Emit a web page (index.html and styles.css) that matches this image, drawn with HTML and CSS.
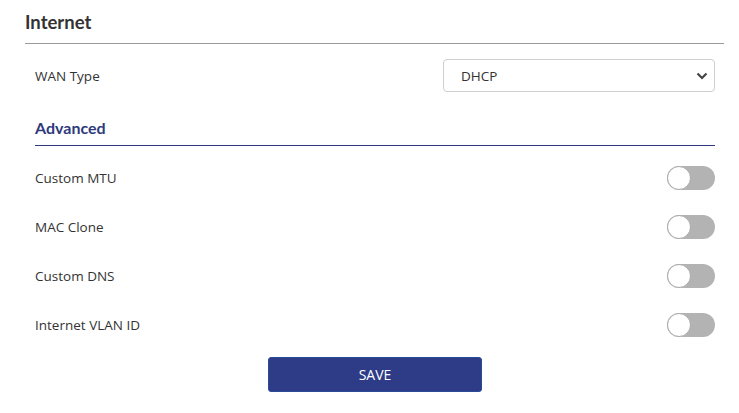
FILE: index.html
```
<!DOCTYPE html>
<html>
<head>
<meta charset="utf-8">
<link rel="stylesheet" href="styles.css">
</head>
<body>
<div class="page">
  <h1 class="title">Internet</h1>
  <div class="section">
    <div class="wan-row">
      <span class="label">WAN Type</span>
      <div class="select">
        <span>DHCP</span>
        <svg class="chev" width="12" height="8" viewBox="0 0 12 8"><path d="M1.5 1.5 L6 6 L10.5 1.5" fill="none" stroke="#444" stroke-width="2.2"/></svg>
      </div>
    </div>
    <h2 class="sub">Advanced</h2>
    <div class="rows">
      <div class="row"><span class="label">Custom MTU</span><span class="toggle"><span class="knob"></span></span></div>
      <div class="row"><span class="label">MAC Clone</span><span class="toggle"><span class="knob"></span></span></div>
      <div class="row"><span class="label">Custom DNS</span><span class="toggle"><span class="knob"></span></span></div>
      <div class="row"><span class="label">Internet VLAN ID</span><span class="toggle"><span class="knob"></span></span></div>
    </div>
  </div>
  <div class="actions"><button class="save">SAVE</button></div>
</div>
</body>
</html>
```
FILE: styles.css
```
* { box-sizing: border-box; }
html, body { margin: 0; padding: 0; background: #fff; }
body { font-family: "Open Sans", "Segoe UI", sans-serif; color: #333; }
.page { width: 699px; margin-left: 25px; }
.title {
  margin: 0;
  height: 44px;
  padding-top: 1px;
  line-height: 43px;
  font-family: Lato, "Open Sans", sans-serif;
  font-weight: 700;
  font-size: 18.5px;
  color: #333;
  border-bottom: 1px solid #9a9a9a;
}
.section { padding: 0 9px 0 10px; }
.wan-row {
  margin-top: 15px;
  height: 33px;
  display: flex;
  align-items: center;
  justify-content: space-between;
}
.label { font-size: 13.5px; color: #333; }
.select {
  width: 272px;
  height: 33px;
  border: 1px solid #cfcfcf;
  border-radius: 4px;
  display: flex;
  align-items: center;
  justify-content: space-between;
  padding: 0 6px 0 17px;
  font-size: 13.5px;
  color: #333;
}
.chev { display: block; }
.sub {
  margin: 0;
  padding-top: 25px;
  padding-bottom: 6px;
  line-height: 22px;
  font-family: Lato, "Open Sans", sans-serif;
  font-weight: 700;
  font-size: 16px;
  color: #2e3a7c;
  border-bottom: 1px solid #2e3a7c;
}
.rows { padding-top: 7px; }
.row {
  height: 49px;
  display: flex;
  align-items: center;
  justify-content: space-between;
}
.toggle {
  width: 48px;
  height: 24px;
  border-radius: 12px;
  background: #b3b3b3;
  display: flex;
  align-items: center;
}
.knob {
  width: 24px;
  height: 24px;
  border-radius: 50%;
  background: #fff;
  border: 1px solid #a9a9a9;
}
.actions { margin-top: 8px; display: flex; justify-content: center; }
.save {
  width: 214px;
  height: 35px;
  background: #2e3b86;
  color: #fff;
  border: 1px solid #2a4a9a;
  border-radius: 3px;
  font-family: "Open Sans", "Segoe UI", sans-serif;
  font-size: 14px;
  margin-left: 1px;
}
```
